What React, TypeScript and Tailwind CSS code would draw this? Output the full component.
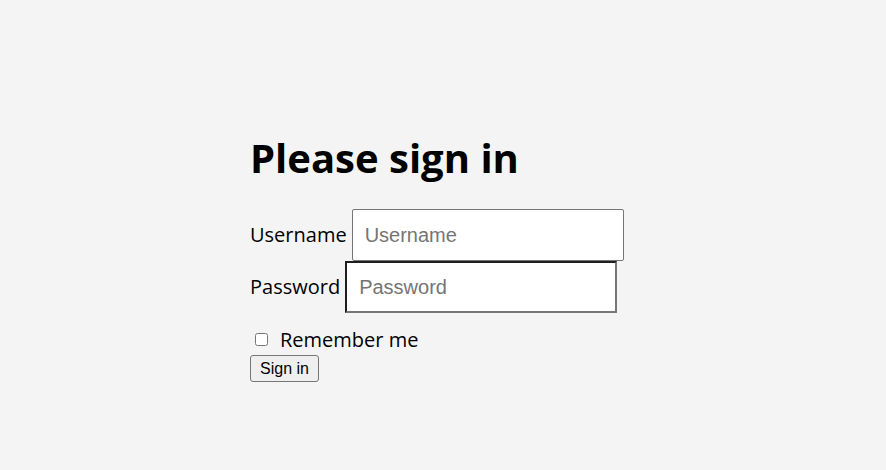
export default function App() {
  return (
    <div className="min-h-screen bg-[#f4f4f4] font-['Segoe_UI','Open_Sans',sans-serif] text-black">
      <div className="pl-[250px] pt-[131px]">
        <h1 className="text-[40px] font-bold leading-[53px]">Please sign in</h1>

        <form className="mt-[25px] flex flex-col items-start">
          {/* Username */}
          <div className="flex items-baseline gap-[5px]">
            <label htmlFor="username" className="text-[20px]">
              Username
            </label>
            <input
              id="username"
              type="text"
              placeholder="Username"
              className="h-[52px] w-[272px] rounded-[2px] border border-[#767676] bg-white px-[12px] font-['Liberation_Sans',Arial,sans-serif] text-[20px] placeholder:text-[#757575] focus:outline-none"
            />
          </div>

          {/* Password */}
          <div className="flex items-baseline gap-[5px]">
            <label htmlFor="password" className="text-[20px]">
              Password
            </label>
            <input
              id="password"
              type="password"
              placeholder="Password"
              className="h-[52px] w-[272px] border-2 border-t-[#1e1e1e] border-l-[#1e1e1e] border-r-[#767676] border-b-[#767676] bg-white px-[12px] font-['Liberation_Sans',Arial,sans-serif] text-[20px] placeholder:text-[#757575] focus:outline-none"
            />
          </div>

          {/* Remember me */}
          <label className="mt-[13px] flex h-[27px] items-center text-[20px]">
            <input
              type="checkbox"
              className="ml-[5px] mr-[12px] h-[13px] w-[13px]"
            />
            Remember me
          </label>

          <button
            type="submit"
            className="mt-[2px] h-[27px] w-[69px] rounded-[3px] border border-[#767676] bg-[#efefef] font-['Liberation_Sans',Arial,sans-serif] text-[16px] leading-none"
          >
            Sign in
          </button>
        </form>
      </div>
    </div>
  );
}
